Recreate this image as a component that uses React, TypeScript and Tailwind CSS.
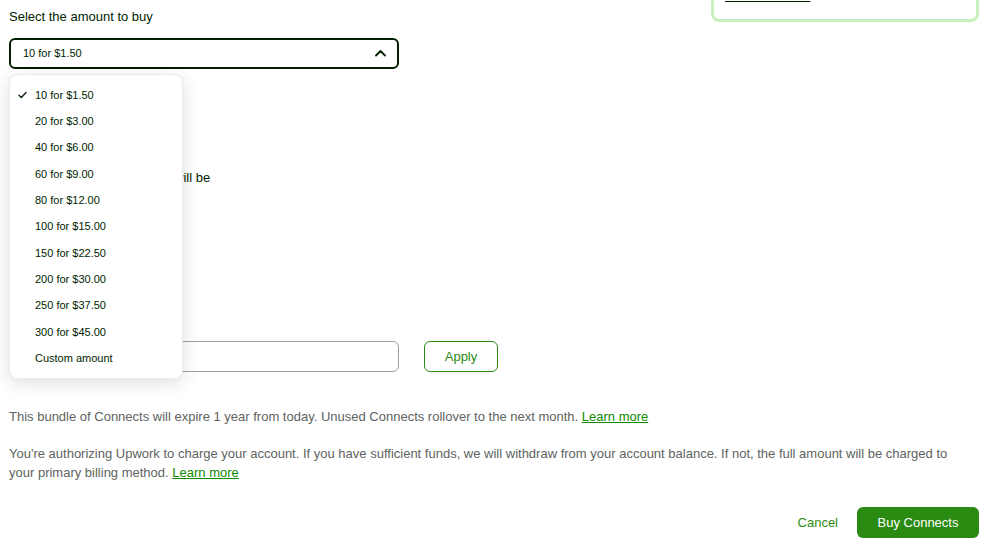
import { useState } from 'react';

const options = [
  '10 for $1.50',
  '20 for $3.00',
  '40 for $6.00',
  '60 for $9.00',
  '80 for $12.00',
  '100 for $15.00',
  '150 for $22.50',
  '200 for $30.00',
  '250 for $37.50',
  '300 for $45.00',
  'Custom amount',
];

export default function App() {
  const [selected] = useState(options[0]);

  return (
    <div className="min-h-screen bg-white font-['Liberation_Sans',Arial,sans-serif] text-[13px] text-[#001e00] pl-[9px] pr-[22px] overflow-hidden">
      {/* Top: form + subscription card */}
      <div className="flex justify-between items-start">
        <div className="w-[390px]">
          <div className="mt-[8px] leading-[18px]">Select the amount to buy</div>

          <div className="relative mt-[12px]">
            <button className="w-full h-[31px] border-2 border-[#001e00] rounded-[6px] px-[12px] flex items-center justify-between text-[11px] text-[#001e00]">
              <span>{selected}</span>
              <svg width="13" height="13" viewBox="0 0 13 13" fill="none" className="mr-[-2px]">
                <path d="M2 8.5 L6.5 4 L11 8.5" stroke="#001e00" strokeWidth="1.8" strokeLinecap="round" strokeLinejoin="round" />
              </svg>
            </button>

            {/* Dropdown menu */}
            <ul className="absolute left-0 top-[36px] z-10 w-[174px] bg-white rounded-[8px] border border-[#e8ece8] shadow-[0_4px_18px_rgba(0,0,0,0.13)] py-[7px]">
              {options.map((o) => (
                <li key={o} className="h-[26.3px] flex items-center text-[11px] text-[#001e00]">
                  <span className="w-[25px] flex justify-end pr-[8px]">
                    {o === selected && (
                      <svg width="9" height="8" viewBox="0 0 9 8" fill="none">
                        <path d="M1 4.2 L3.4 6.5 L8 1.5" stroke="#001e00" strokeWidth="1.3" strokeLinecap="round" strokeLinejoin="round" />
                      </svg>
                    )}
                  </span>
                  {o}
                </li>
              ))}
            </ul>
          </div>

          {/* Content under the open menu */}
          <div className="mt-[100px] leading-[18px]">Your new Connects balance will be</div>
        </div>

        <div className="w-[268px] h-[122px] -mt-[100px] border-[3px] border-[#c9f0bd] rounded-[8px] px-[11px] pb-[15px] flex flex-col justify-end">
          <div className="flex items-center gap-[8px] leading-[16px]">
            <span className="underline">Subscribe now</span>
            <span>→</span>
          </div>
        </div>
      </div>

      {/* Promo row */}
      <div className="flex items-center gap-[25px] mt-[154px]">
        <input className="w-[390px] h-[31px] border border-[#9aa09a] rounded-[6px] px-[12px] outline-none" />
        <button className="w-[74px] h-[31px] border border-[#2b8a11] rounded-[6px] text-[#2b8a11] text-[13px]">Apply</button>
      </div>

      <p className="mt-[35px] leading-[19px] text-[#5e6360]">
        This bundle of Connects will expire 1 year from today. Unused Connects rollover to the next month.{' '}
        <a className="text-[#108a00] underline">Learn more</a>
      </p>

      <p className="mt-[18px] max-w-[955px] leading-[19px] text-[#5e6360]">
        You're authorizing Upwork to charge your account. If you have sufficient funds, we will withdraw from your account balance. If not, the full amount will be charged to your primary billing method.{' '}
        <a className="text-[#108a00] underline">Learn more</a>
      </p>

      <div className="flex justify-end items-center mt-[25px] gap-[19px]">
        <button className="text-[#2b8a11] text-[13px] font-medium">Cancel</button>
        <button className="w-[122px] h-[31px] rounded-[6px] bg-[#2a8a12] text-white text-[13px] font-medium">Buy Connects</button>
      </div>
    </div>
  );
}
